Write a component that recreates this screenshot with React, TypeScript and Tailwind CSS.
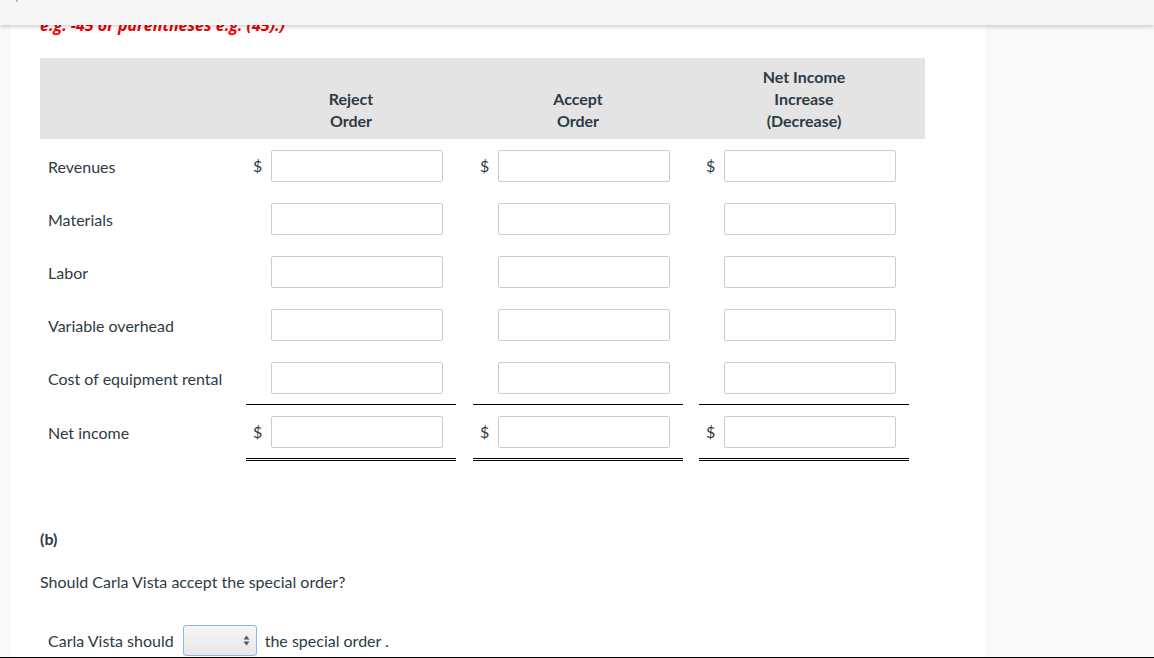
import React from "react";

const rows = ["Revenues", "Materials", "Labor", "Variable overhead", "Cost of equipment rental"];

const Box = () => (
  <div className="w-[172px] h-[32px] border border-[#cccccc] rounded-[2px] bg-white" />
);

const Cell = ({ dollar }: { dollar?: boolean }) => (
  <div className="flex items-center w-[210px]">
    <span className="w-[25px] pl-[7px]">{dollar ? "$" : ""}</span>
    <Box />
  </div>
);

const App = () => {
  return (
    <div className="relative h-[658px] overflow-hidden bg-[#f9f9f9] text-[#2d3b45] font-['Lato','Liberation_Sans',sans-serif] border-b border-black">
      <div className="absolute top-0 left-0 right-0 h-[25px] bg-[#f7f7f7] shadow-[0_2px_4px_rgba(0,0,0,0.18)] z-10">
        <div className="ml-[16px] w-[2px] h-[2px] bg-[#bbbbbb]" />
      </div>

      <div className="ml-[11px] w-[974px] h-full bg-white pl-[29px]">
        <p className="pt-[13px] h-[37px] text-[16px] leading-[24px] font-bold italic text-[#ee0000] font-['Open_Sans',sans-serif]">
          e.g. -45 or parentheses e.g. (45).)
        </p>

        <div className="mt-[21px] w-[885px] text-[16px]">
          <div className="grid grid-cols-[206px_227px_226px_226px] items-end h-[81px] pb-[7px] bg-[#e4e4e4] leading-[22px] font-bold">
            <div />
            <div className="w-[210px] text-center">Reject<br />Order</div>
            <div className="w-[210px] text-center">Accept<br />Order</div>
            <div className="w-[210px] text-center">Net Income<br />Increase<br />(Decrease)</div>
          </div>

          {rows.map((r, i) => (
            <div key={r} className="grid grid-cols-[206px_227px_226px_226px] items-center h-[53px]">
              <div className="pl-[8px] pt-[2px]">{r}</div>
              <Cell dollar={i === 0} />
              <Cell dollar={i === 0} />
              <Cell dollar={i === 0} />
            </div>
          ))}

          <div className="grid grid-cols-[206px_227px_226px_226px] items-center">
            <div className="pl-[8px]">Net income</div>
            {[0, 1, 2].map((k) => (
              <div key={k} className="w-[210px]">
                <div className="h-[54px] flex items-center border-t border-black">
                  <span className="w-[25px] pl-[7px]">$</span>
                  <Box />
                </div>
                <div className="h-[3px] border-y border-black" />
              </div>
            ))}
          </div>
        </div>

        <p className="mt-[66px] text-[16px] leading-[24px] font-bold">(b)</p>
        <p className="mt-[19px] text-[16px] leading-[24px]">Should Carla Vista accept the special order?</p>

        <div className="mt-[31px] pl-[8px] flex items-center gap-[9px] text-[16px]">
          <span>Carla Vista should</span>
          <div className="w-[74px] h-[31px] rounded-[3px] border border-[#8ab6ea] bg-gradient-to-b from-[#f6f6f6] to-[#e6e6e6] flex items-center justify-end pr-[6px]">
            <svg width="7" height="11" viewBox="0 0 7 11">
              <path d="M3.5 0.5L6.5 4.5H0.5Z" fill="#555" />
              <path d="M3.5 10.5L6.5 6.5H0.5Z" fill="#555" />
            </svg>
          </div>
          <span className="-ml-[1px]">the special order .</span>
        </div>
      </div>
    </div>
  );
};

export default App;
